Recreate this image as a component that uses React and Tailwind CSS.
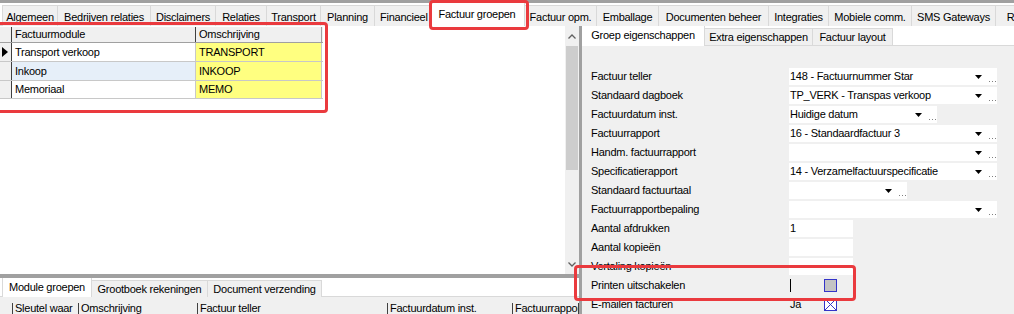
import React from 'react';

const topTabs = [
  { label: 'Algemeen', w: 56 },
  { label: 'Bedrijven relaties', w: 93 },
  { label: 'Disclaimers', w: 65 },
  { label: 'Relaties', w: 51 },
  { label: 'Transport', w: 54 },
  { label: 'Planning', w: 54 },
  { label: 'Financieel', w: 57, clip: true },
  { label: 'Factuur groepen', w: 94, active: true },
  { label: 'Factuur opm.', w: 72 },
  { label: 'Emballage', w: 62 },
  { label: 'Documenten beheer', w: 110 },
  { label: 'Integraties', w: 60 },
  { label: 'Mobiele comm.', w: 83 },
  { label: 'SMS Gateways', w: 84 },
  { label: 'R', w: 30 },
];

const rows = [
  { label: 'Factuur teller', value: '148 - Factuurnummer Star', w: 208, combo: true },
  { label: 'Standaard dagboek', value: 'TP_VERK - Transpas verkoop', w: 208, combo: true },
  { label: 'Factuurdatum inst.', value: 'Huidige datum', w: 148, combo: true },
  { label: 'Factuurrapport', value: '16 - Standaardfactuur 3', w: 208, combo: true },
  { label: 'Handm. factuurrapport', value: '', w: 208, combo: true },
  { label: 'Specificatierapport', value: '14 - Verzamelfactuurspecificatie', w: 208, combo: true },
  { label: 'Standaard factuurtaal', value: '', w: 118, combo: true },
  { label: 'Factuurrapportbepaling', value: '', w: 208, combo: true },
  { label: 'Aantal afdrukken', value: '1', w: 64 },
  { label: 'Aantal kopieën', value: '', w: 64 },
  { label: 'Vertaling kopieën', value: '', w: 64 },
  { label: 'Printen uitschakelen', check: 'grey' },
  { label: 'E-mailen facturen', check: 'x', text: 'Ja' },
];

const DropArrow = () => (
  <svg width="7" height="4" viewBox="0 0 7 4" className="block">
    <polygon points="0,0 7,0 3.5,4" fill="#000" />
  </svg>
);

const Dots = () => (
  <svg width="7" height="2" viewBox="0 0 7 2" className="block">
    <rect x="0" y="0" width="1" height="1" fill="#808080" />
    <rect x="3" y="0" width="1" height="1" fill="#808080" />
    <rect x="6" y="0" width="1" height="1" fill="#808080" />
  </svg>
);

const Field = ({ row }) => {
  if (row.check) {
    return (
      <div className="flex items-center h-[17px]">
        <span className="w-[35px] pl-[1px]">{row.text || <span className="inline-block w-px h-[13px] bg-black align-middle" />}</span>
        {row.check === 'grey' ? (
          <span className="w-[13px] h-[13px] border border-[#3434c8] bg-[#c4c4c4]" />
        ) : (
          <svg width="13" height="13" viewBox="0 0 13 13" className="block">
            <rect x="0.5" y="0.5" width="12" height="12" fill="#fff" stroke="#3434c8" />
            <line x1="1" y1="1" x2="12" y2="12" stroke="#3434c8" />
            <line x1="12" y1="1" x2="1" y2="12" stroke="#3434c8" />
          </svg>
        )}
      </div>
    );
  }
  return (
    <div className="relative flex items-center h-[17px] bg-white" style={{ width: row.w }}>
      <span className="pl-[1px] whitespace-nowrap">{row.value}</span>
      {row.combo && (
        <>
          <span className="absolute right-[15px] top-[7px]"><DropArrow /></span>
          <span className="absolute right-[1px] bottom-[2px]"><Dots /></span>
        </>
      )}
    </div>
  );
};

const Chevron = ({ up }) => (
  <svg width="8" height="5" viewBox="0 0 8 5" className="block">
    <polyline points={up ? '0.5,4.5 4,1 7.5,4.5' : '0.5,0.5 4,4 7.5,0.5'} fill="none" stroke="#606060" strokeWidth="1.3" />
  </svg>
);

export default function App() {
  return (
    <div className="relative w-[1014px] h-[314px] overflow-hidden bg-white text-[11px] tracking-[-0.25px] text-black font-['Liberation_Sans',Arial,sans-serif] leading-none">
      {/* top bar + main tabs */}
      <div className="h-[3px] bg-[#a0a0a0]" />
      <div className="flex h-[23px] pt-[1px] pl-[2px] border-b border-[#d9d9d9]">
        {topTabs.map((t) =>
          t.active ? (
            <div key={t.label} className="relative z-10 -ml-[3px] -mt-[2px] h-[24px] flex items-start justify-center pt-[6px] bg-white border border-b-0 border-[#d9d9d9] whitespace-nowrap overflow-hidden shrink-0" style={{ width: t.w + 2 }}>
              {t.label}
            </div>
          ) : (
            <div key={t.label} className={'h-[21px] mt-[1px] flex items-center bg-[#f0f0f0] border-r border-t border-[#d9d9d9] first:border-l whitespace-nowrap overflow-hidden shrink-0 pt-[2px] ' + (t.clip ? 'justify-start pl-[5px]' : 'justify-center')} style={{ width: t.w }}>
              {t.label}
            </div>
          )
        )}
      </div>

      <div className="flex h-[288px]">
        {/* left block */}
        <div className="w-[579px] flex flex-col shrink-0">
          <div className="flex h-[255px]">
            <div className="w-[565px] pt-[1px]">
              <div className="w-[323px] border-b border-[#c8c8c8]">
                <div className="flex h-[16px] bg-[#f0f0f0] border-b border-[#a0a0a0]">
                  <div className="w-[12px] border-r border-[#404040]" />
                  <div className="w-[184px] pl-[3px] flex items-center border-r border-[#404040]">Factuurmodule</div>
                  <div className="w-[126px] pl-[3px] flex items-center border-r border-[#a0a0a0]">Omschrijving</div>
                </div>
                {[
                  ['Transport verkoop', 'TRANSPORT', true, 'bg-white'],
                  ['Inkoop', 'INKOOP', false, 'bg-[#e6eff9]'],
                  ['Memoriaal', 'MEMO', false, 'bg-white'],
                ].map(([a, b, cur, bg], i) => (
                  <div key={a} className={'flex ' + (i === 2 ? 'h-[17px]' : 'h-[19px] border-b border-[#c8c8c8]')}>
                    <div className="w-[12px] bg-[#f0f0f0] border-r border-[#404040] flex items-center pl-[2px]">
                      {cur && (
                        <svg width="6" height="10" viewBox="0 0 6 10"><polygon points="0,0 6,5 0,10" fill="#000" /></svg>
                      )}
                    </div>
                    <div className={'w-[184px] pl-[3px] flex items-center border-r border-[#c8c8c8] ' + bg}>{a}</div>
                    <div className="w-[126px] pl-[3px] flex items-center bg-[#ffff80] border-r border-[#c8c8c8]">{b}</div>
                  </div>
                ))}
              </div>
            </div>
            {/* vertical scrollbar */}
            <div className="w-[14px] flex flex-col bg-[#f0f0f0]">
              <div className="h-[20px] flex items-center justify-center"><Chevron up /></div>
              <div className="h-[124px] mx-[1px] bg-[#cdcdcd]" />
              <div className="flex-1" />
              <div className="h-[20px] flex items-center justify-center"><Chevron /></div>
            </div>
          </div>
          <div className="h-[4px] bg-[#a0a0a0]" />
          {/* bottom tabs */}
          <div className="flex h-[19px] pl-[2px] border-b border-[#d9d9d9]">
            <div className="w-[90px] h-[19px] flex items-center justify-center bg-white border-l border-r border-[#d9d9d9]">Module groepen</div>
            <div className="w-[116px] h-[17px] mt-[2px] flex items-center justify-center bg-[#f0f0f0] border-r border-t border-[#d9d9d9]">Grootboek rekeningen</div>
            <div className="w-[114px] h-[17px] mt-[2px] flex items-center justify-center bg-[#f0f0f0] border-r border-t border-[#d9d9d9]">Document verzending</div>
          </div>
          <div className="flex flex-1 bg-[#f0f0f0] pt-[6px]">
            <div className="w-[13px] border-r border-[#404040]" />
            <div className="w-[66px] pl-[2px] border-r border-[#404040] whitespace-nowrap overflow-hidden">Sleutel waar</div>
            <div className="w-[119px] pl-[2px] border-r border-[#404040]">Omschrijving</div>
            <div className="w-[190px] pl-[2px] border-r border-[#404040]">Factuur teller</div>
            <div className="w-[125px] pl-[2px] border-r border-[#404040]">Factuurdatum inst.</div>
            <div className="w-[66px] pl-[2px] whitespace-nowrap overflow-hidden border-r border-[#404040]">Factuurrapport</div>
          </div>
        </div>

        <div className="w-[3px] bg-[#a0a0a0] shrink-0" />

        {/* right panel */}
        <div className="flex-1 flex flex-col bg-[#f0f0f0]">
          <div className="flex h-[20px] bg-white border-b border-[#d9d9d9]">
            <div className="w-[123px] h-[20px] flex items-center justify-center bg-white border-r border-[#d9d9d9] pb-[2px]">Groep eigenschappen</div>
            <div className="w-[108px] h-[17px] mt-[2px] flex items-center justify-center bg-[#f0f0f0] border-r border-t border-[#d9d9d9]">Extra eigenschappen</div>
            <div className="w-[80px] h-[17px] mt-[2px] flex items-center justify-center bg-[#f0f0f0] border-r border-t border-[#d9d9d9]">Factuur layout</div>
          </div>
          <div className="pt-[22px] pl-[9px] flex flex-col">
            {rows.map((r) => (
              <div key={r.label} className="flex items-start h-[19px]">
                <div className="w-[198px] h-[17px] flex items-center whitespace-nowrap">{r.label}</div>
                <Field row={r} />
              </div>
            ))}
          </div>
        </div>
      </div>

      {/* red annotation boxes */}
      <div className="absolute left-[429px] top-0 w-[100px] h-[30px] border-[3px] border-[#ea3a3e] rounded-[4px] z-20" />
      <div className="absolute left-[-10px] top-[22px] w-[338px] h-[91px] border-[3px] border-[#ea3a3e] rounded-[4px] z-20" />
      <div className="absolute left-[574px] top-[265px] w-[282px] h-[36px] border-[3px] border-[#ea3a3e] rounded-[4px] z-20" />
    </div>
  );
}
